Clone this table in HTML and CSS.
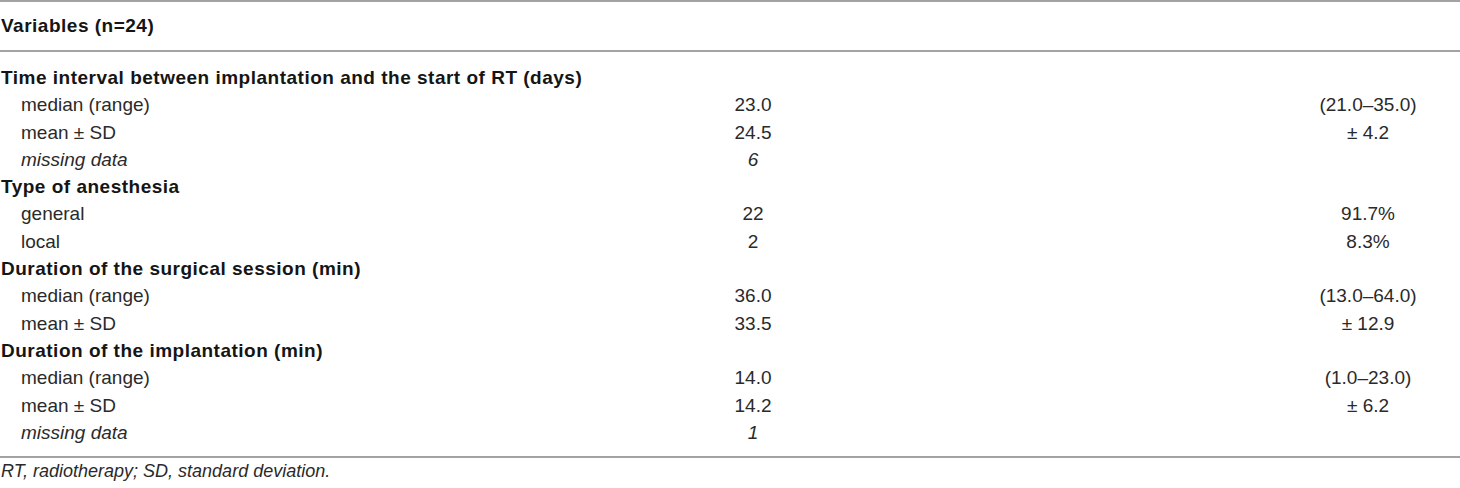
FILE: index.html
```html
<!DOCTYPE html>
<html lang="en">
<head>
<meta charset="utf-8">
<title>Table</title>
<link rel="stylesheet" href="styles.css">
</head>
<body>
<div class="wrap">
<table class="data">
  <colgroup>
    <col class="w1">
    <col class="w2">
    <col class="w3">
  </colgroup>
  <thead>
    <tr><th colspan="3">Variables (n=24)</th></tr>
  </thead>
  <tbody>
    <tr class="first"><td class="grp" colspan="3">Time interval between implantation and the start of RT (days)</td></tr>
    <tr><td class="lbl">median (range)</td><td class="v">23.0</td><td class="x">(21.0–35.0)</td></tr>
    <tr><td class="lbl">mean ± SD</td><td class="v">24.5</td><td class="x">± 4.2</td></tr>
    <tr><td class="lbl it">missing data</td><td class="v it">6</td><td class="x"></td></tr>
    <tr><td class="grp" colspan="3">Type of anesthesia</td></tr>
    <tr><td class="lbl">general</td><td class="v">22</td><td class="x">91.7%</td></tr>
    <tr><td class="lbl">local</td><td class="v">2</td><td class="x">8.3%</td></tr>
    <tr><td class="grp" colspan="3">Duration of the surgical session (min)</td></tr>
    <tr><td class="lbl">median (range)</td><td class="v">36.0</td><td class="x">(13.0–64.0)</td></tr>
    <tr><td class="lbl">mean ± SD</td><td class="v">33.5</td><td class="x">± 12.9</td></tr>
    <tr><td class="grp" colspan="3">Duration of the implantation (min)</td></tr>
    <tr><td class="lbl">median (range)</td><td class="v">14.0</td><td class="x">(1.0–23.0)</td></tr>
    <tr><td class="lbl">mean ± SD</td><td class="v">14.2</td><td class="x">± 6.2</td></tr>
    <tr class="last"><td class="lbl it">missing data</td><td class="v it">1</td><td class="x"></td></tr>
  </tbody>
</table>
<p class="note">RT, radiotherapy; SD, standard deviation.</p>
</div>
</body>
</html>
```
FILE: styles.css
```css
html, body {
  margin: 0;
  padding: 0;
  background: #ffffff;
}
body {
  font-family: "Liberation Sans", Arial, Helvetica, sans-serif;
  color: #1c1c1c;
}
.wrap {
  width: 1460px;
}
.data {
  width: 1460px;
  border-collapse: collapse;
  table-layout: fixed;
  border-top: 2px solid #a3a3a3;
  border-bottom: 2px solid #a3a3a3;
}
.w1 { width: 663px; }
.w2 { width: 180px; }
.w3 { width: 617px; }
.data th {
  height: 48px;
  padding: 0 0 0 1px;
  text-align: left;
  font-weight: bold;
  font-size: 19px;
  letter-spacing: 0.5px;
  color: #151515;
  border-bottom: 2px solid #a3a3a3;
  vertical-align: middle;
}
.data td {
  padding: 0;
  height: 27.3px;
  line-height: 27.3px;
  font-size: 19px;
  color: #2a2a2a;
  white-space: nowrap;
}
.data tr.first td {
  padding-top: 12px;
}
.data tr.last td {
  padding-bottom: 10px;
}
.data td.grp {
  padding-left: 1px;
  font-weight: bold;
  letter-spacing: 0.5px;
  color: #151515;
}
.data td.lbl {
  padding-left: 21px;
}
.data td.v {
  text-align: center;
}
.data td.x {
  padding-left: 433px;
  text-align: center;
}
.it {
  font-style: italic;
}
.note {
  margin: 0;
  padding-left: 1px;
  font-size: 18px;
  line-height: 27px;
  font-style: italic;
  color: #2a2a2a;
}
```
